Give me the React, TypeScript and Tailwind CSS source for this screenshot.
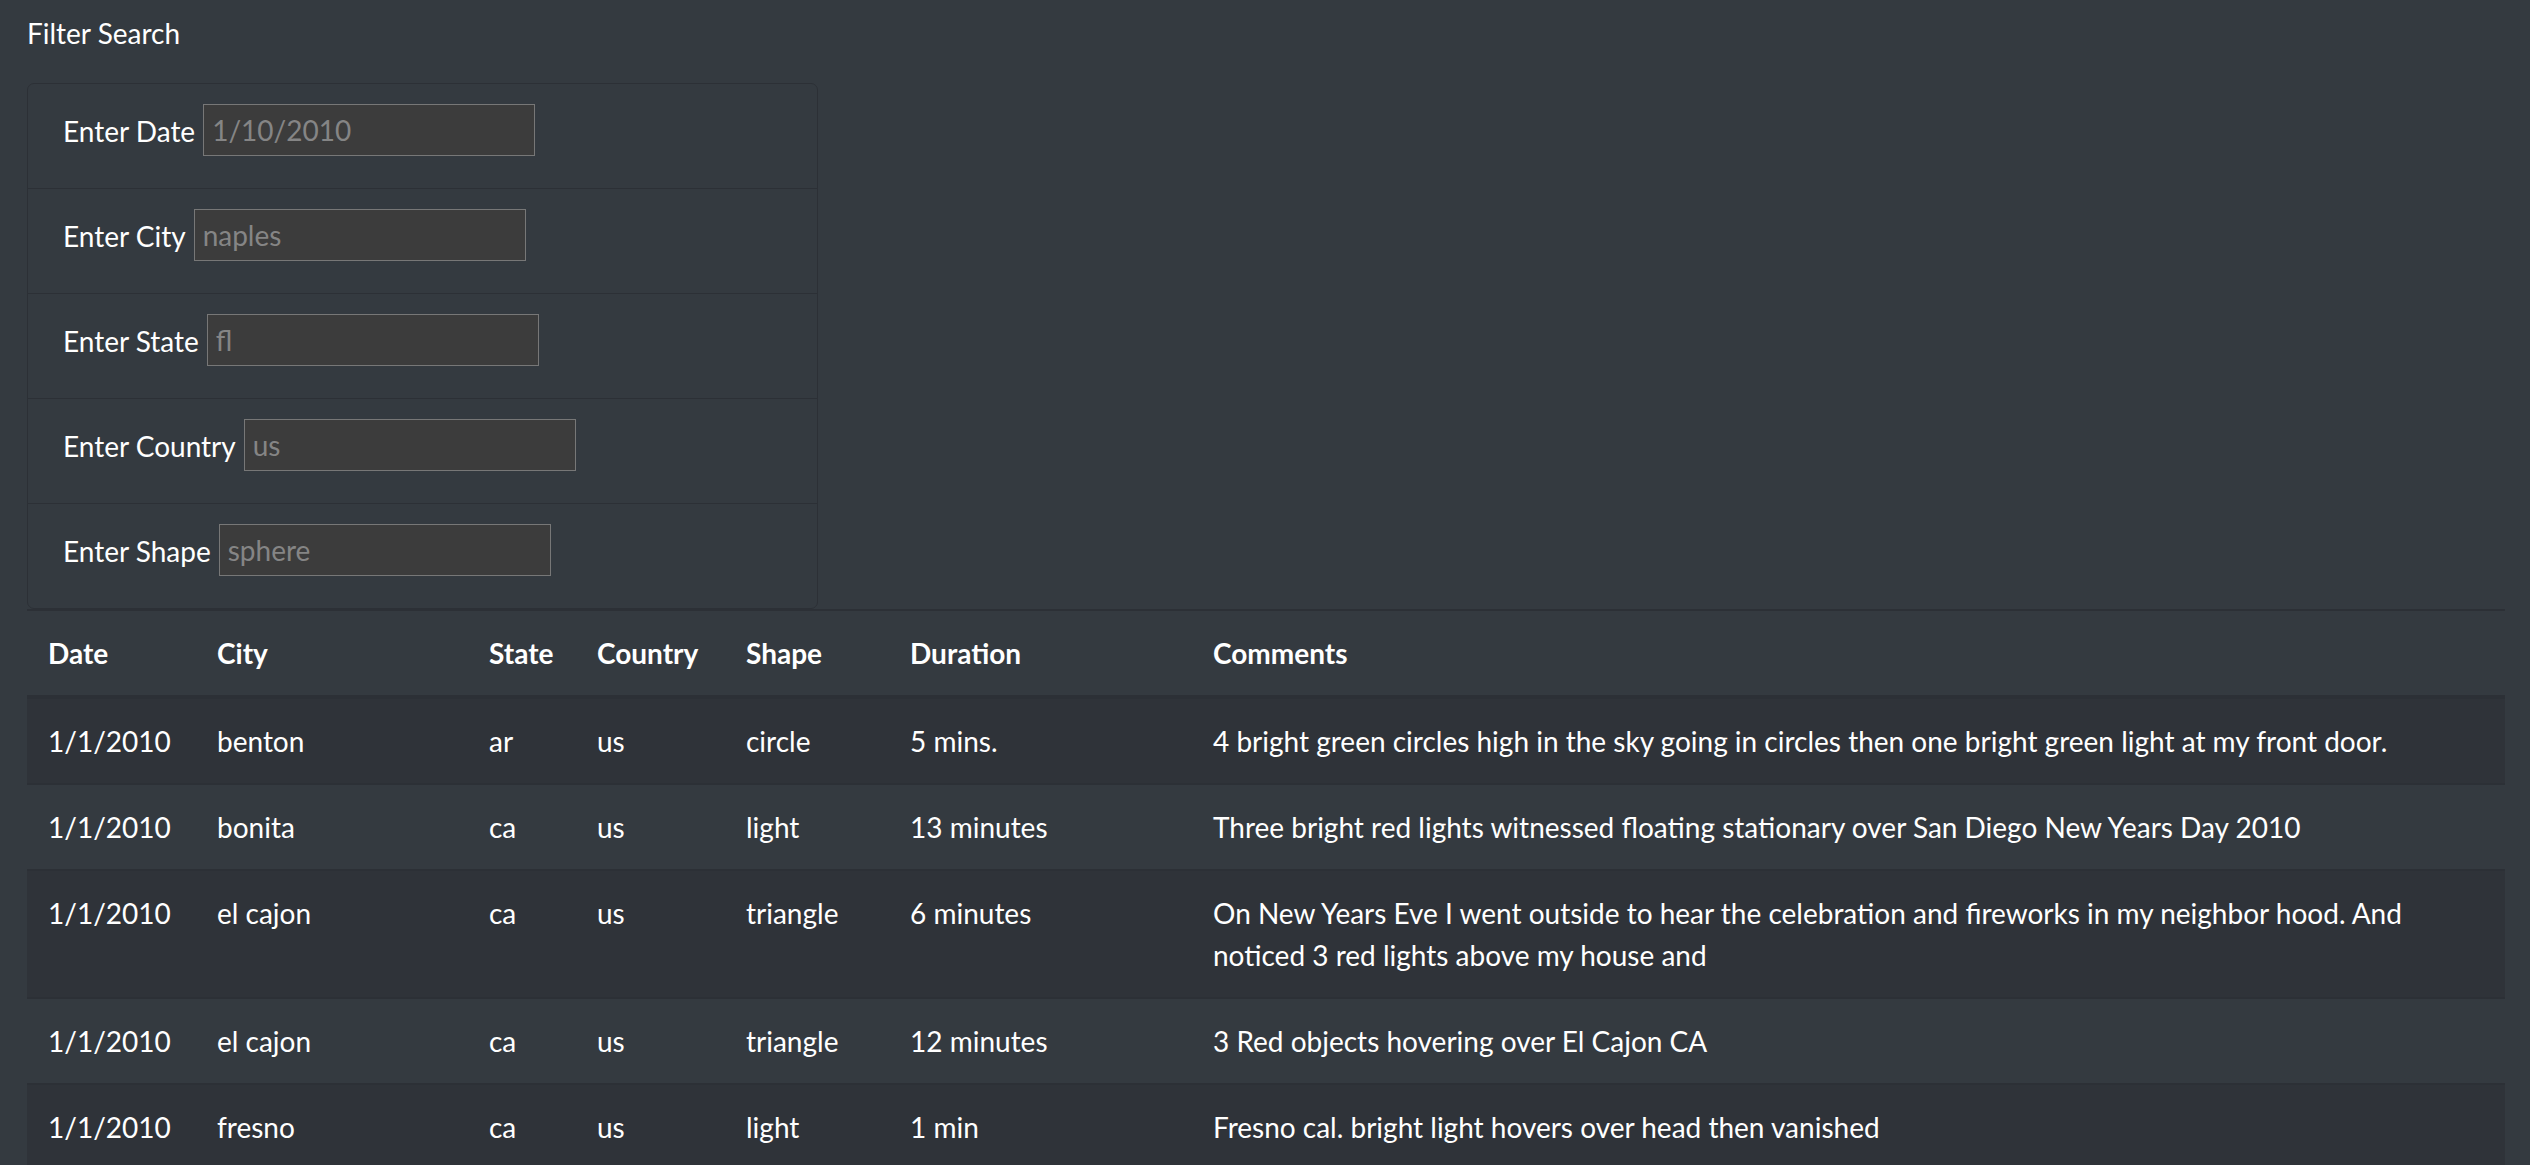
const filters = [
  { label: "Enter Date", placeholder: "1/10/2010" },
  { label: "Enter City", placeholder: "naples" },
  { label: "Enter State", placeholder: "fl" },
  { label: "Enter Country", placeholder: "us" },
  { label: "Enter Shape", placeholder: "sphere" },
];

const rows = [
  ["1/1/2010", "benton", "ar", "us", "circle", "5 mins.", "4 bright green circles high in the sky going in circles then one bright green light at my front door."],
  ["1/1/2010", "bonita", "ca", "us", "light", "13 minutes", "Three bright red lights witnessed floating stationary over San Diego New Years Day 2010"],
  ["1/1/2010", "el cajon", "ca", "us", "triangle", "6 minutes", "On New Years Eve I went outside to hear the celebration and fireworks in my neighbor hood. And noticed 3 red lights above my house and"],
  ["1/1/2010", "el cajon", "ca", "us", "triangle", "12 minutes", "3 Red objects hovering over El Cajon CA"],
  ["1/1/2010", "fresno", "ca", "us", "light", "1 min", "Fresno cal. bright light hovers over head then vanished"],
];

const headers = [
  { name: "Date", w: "w-[169px]" },
  { name: "City", w: "w-[272px]" },
  { name: "State", w: "w-[108px]" },
  { name: "Country", w: "w-[149px]" },
  { name: "Shape", w: "w-[164px]" },
  { name: "Duration", w: "w-[303px]" },
  { name: "Comments", w: "" },
];

export default function App() {
  return (
    <div className="min-h-screen bg-[#343a40] text-white pl-[27px] pr-[25px] font-['Lato','Liberation_Sans',sans-serif] text-[28px] leading-[42px] overflow-hidden">
      <p className="pt-[12px] mb-[29px]">Filter Search</p>

      <div className="w-[791px] border border-[#2c3036] rounded-[7px]">
        {filters.map((f, i) => (
          <div
            key={f.label}
            className={`flex items-center gap-[8px] pl-[35px] pt-[20px] pb-[32px] ${i > 0 ? "border-t border-[#2c3036]" : ""}`}
          >
            <label className="relative top-[1px]">{f.label}</label>
            <input
              type="text"
              placeholder={f.placeholder}
              className="w-[332px] h-[52px] bg-[#3c3c3c] border border-[#777777] px-[8px] text-[28px] text-white placeholder:text-[#858585] outline-none"
            />
          </div>
        ))}
      </div>

      <table className="w-full table-fixed border-collapse">
        <thead>
          <tr>
            {headers.map((h) => (
              <th
                key={h.name}
                className={`${h.w} text-left font-bold align-top px-[21px] py-[21px] border-t-2 border-b-[4px] border-[#2c3036]`}
              >
                {h.name}
              </th>
            ))}
          </tr>
        </thead>
        <tbody>
          {rows.map((r, i) => (
            <tr key={i} className={i % 2 === 0 ? "bg-[#2f3339]" : ""}>
              {r.map((c, j) => (
                <td key={j} className="align-top px-[21px] py-[21px] border-t-2 border-[#2c3036]">
                  {c}
                </td>
              ))}
            </tr>
          ))}
        </tbody>
      </table>
    </div>
  );
}
